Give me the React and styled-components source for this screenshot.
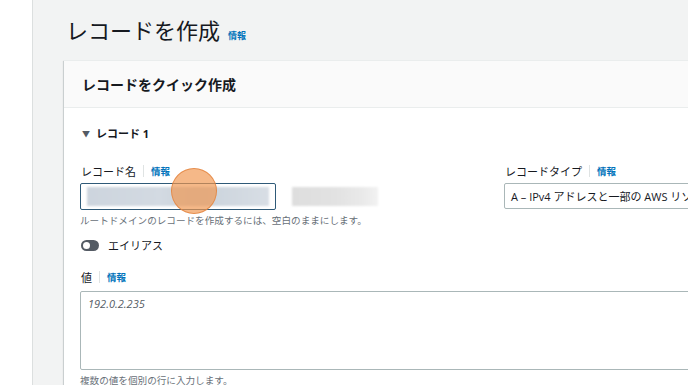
import React from "react";
import styled, { createGlobalStyle } from "styled-components";

const Global = createGlobalStyle`
  html, body { margin: 0; padding: 0; overflow: hidden; background: #fff; }
  body { font-family: "Open Sans", "Noto Sans CJK JP", sans-serif; color: #16191f; }
`;

const Shell = styled.div`
  display: flex;
  width: 688px;
  height: 385px;
  overflow: hidden;
`;

const SideStrip = styled.div`
  flex: 0 0 32px;
  background: #ffffff;
  border-right: 1px solid #dcdfdf;
`;

const Main = styled.main`
  flex: 1 0 auto;
  background: #f2f3f3;
  padding: 14px 0 0 31px;
  min-width: 900px;
`;

const TitleRow = styled.div`
  display: flex;
  align-items: baseline;
  gap: 8px;
  padding-left: 2px;
  height: 46px;
`;

const Title = styled.h1`
  margin: 0;
  font-family: "Noto Sans CJK JP", sans-serif;
  font-size: 22px;
  font-weight: 400;
  line-height: 30px;
  color: #16191f;
`;

const InfoLink = styled.a`
  font-family: "Noto Sans CJK JP", sans-serif;
  font-size: ${(p) => (p.$large ? "9px" : "9.5px")};
  font-weight: 700;
  color: #0073bb;
  text-decoration: none;
`;

const Card = styled.section`
  background: #fff;
  box-shadow: 0 1px 1px 0 rgba(0, 28, 36, 0.25), -1px 1px 1px 0 rgba(0, 28, 36, 0.12);
  border-top: 1px solid #eaeded;
`;

const CardHeader = styled.header`
  background: #fafafa;
  height: 46px;
  display: flex;
  align-items: center;
  padding-left: 18px;
  border-bottom: 1px solid #eaeded;
`;

const CardTitle = styled.h2`
  margin: 0;
  font-family: "Noto Sans CJK JP", sans-serif;
  font-size: 14px;
  font-weight: 700;
  color: #16191f;
`;

const CardBody = styled.div`
  padding: 14px 16px 0 16px;
`;

const Expander = styled.div`
  display: flex;
  align-items: center;
  gap: 6px;
  padding-left: 2px;
  height: 22px;
  font-family: "Open Sans", "Noto Sans CJK JP", sans-serif;
  font-size: 11px;
  font-weight: 700;
`;

const Caret = styled.span`
  font-size: 8px;
  color: #545b64;
`;

const FieldRow = styled.div`
  display: grid;
  grid-template-columns: 424px 1fr;
  margin-top: 17px;
`;

const Field = styled.div`
  display: flex;
  flex-direction: column;
`;

const LabelRow = styled.div`
  display: flex;
  align-items: center;
  height: 20px;
  padding-left: 1px;
  font-family: "Noto Sans CJK JP", sans-serif;
  font-size: 11px;
  color: #16191f;
`;

const Divider = styled.span`
  width: 1px;
  height: 12px;
  background: #dfe3e3;
  margin: 0 7px 0 7px;
`;

const InputLine = styled.div`
  display: flex;
  align-items: center;
  gap: 16px;
  margin-top: 2px;
`;

const TextInput = styled.div`
  position: relative;
  box-sizing: border-box;
  width: 196px;
  height: 27px;
  border: 1px solid #2f5a78;
  border-radius: 2px;
  padding: 3px 6px;
  background: #fff;
`;

const Blur = styled.div`
  height: 19px;
  width: ${(p) => p.$w}px;
  background: ${(p) => p.$bg};
  filter: blur(1px);
`;

const Cursor = styled.div`
  position: absolute;
  left: 90px;
  top: -16px;
  width: 44px;
  height: 44px;
  border-radius: 50%;
  background: rgba(240, 150, 80, 0.68);
  border: 1px solid rgba(226, 130, 60, 0.8);
`;

const Hint = styled.div`
  font-family: "Noto Sans CJK JP", sans-serif;
  font-size: 9.6px;
  color: #687078;
  margin-top: 3px;
  white-space: nowrap;
`;

const Select = styled.div`
  box-sizing: border-box;
  width: 400px;
  height: 26px;
  margin-top: 2px;
  border: 1px solid #aab7b8;
  border-radius: 2px;
  display: flex;
  align-items: center;
  padding-left: 6px;
  font-family: "Open Sans", "Noto Sans CJK JP", sans-serif;
  font-size: 11px;
  color: #16191f;
  white-space: nowrap;
`;

const ToggleRow = styled.div`
  display: flex;
  align-items: center;
  gap: 9px;
  margin-top: 10px;
  padding-left: 1px;
  font-family: "Noto Sans CJK JP", sans-serif;
  font-size: 11px;
`;

const Toggle = styled.span`
  position: relative;
  width: 18px;
  height: 11px;
  border-radius: 6px;
  background: #545b64;
  &::after {
    content: "";
    position: absolute;
    left: 2px;
    top: 2px;
    width: 7px;
    height: 7px;
    border-radius: 50%;
    background: #fff;
  }
`;

const ValueField = styled.div`
  margin-top: 14px;
`;

const TextArea = styled.div`
  box-sizing: border-box;
  width: 700px;
  height: 79px;
  margin-top: 4px;
  border: 1px solid #aab7b8;
  border-radius: 2px;
  padding: 4px 7px;
  font-family: "Open Sans", sans-serif;
  font-style: italic;
  font-size: 11px;
  color: #545b64;
`;

export default function App() {
  return (
    <>
      <Global />
      <Shell>
        <SideStrip />
        <Main>
          <TitleRow>
            <Title>レコードを作成</Title>
            <InfoLink $large>情報</InfoLink>
          </TitleRow>
          <Card>
            <CardHeader>
              <CardTitle>レコードをクイック作成</CardTitle>
            </CardHeader>
            <CardBody>
              <Expander>
                <Caret>▼</Caret>
                <span>レコード 1</span>
              </Expander>
              <FieldRow>
                <Field>
                  <LabelRow>
                    レコード名<Divider />
                    <InfoLink>情報</InfoLink>
                  </LabelRow>
                  <InputLine>
                    <TextInput>
                      <Blur $w={182} $bg="linear-gradient(90deg,#cdd5de 0%,#d3dae2 40%,#c9d2db 60%,#d8dee5 100%)" />
                      <Cursor />
                    </TextInput>
                    <Blur $w={86} $bg="linear-gradient(90deg,#dedede 0%,#e2e2e2 50%,#e9e9e9 80%,#f2f2f2 100%)" />
                  </InputLine>
                  <Hint>ルートドメインのレコードを作成するには、空白のままにします。</Hint>
                </Field>
                <Field>
                  <LabelRow>
                    レコードタイプ<Divider />
                    <InfoLink>情報</InfoLink>
                  </LabelRow>
                  <Select>A – IPv4 アドレスと一部の AWS リソースにトラフィックをルーティング</Select>
                </Field>
              </FieldRow>
              <ToggleRow>
                <Toggle />
                <span>エイリアス</span>
              </ToggleRow>
              <ValueField>
                <LabelRow>
                  値<Divider />
                  <InfoLink>情報</InfoLink>
                </LabelRow>
                <TextArea>192.0.2.235</TextArea>
                <Hint>複数の値を個別の行に入力します。</Hint>
              </ValueField>
            </CardBody>
          </Card>
        </Main>
      </Shell>
    </>
  );
}
